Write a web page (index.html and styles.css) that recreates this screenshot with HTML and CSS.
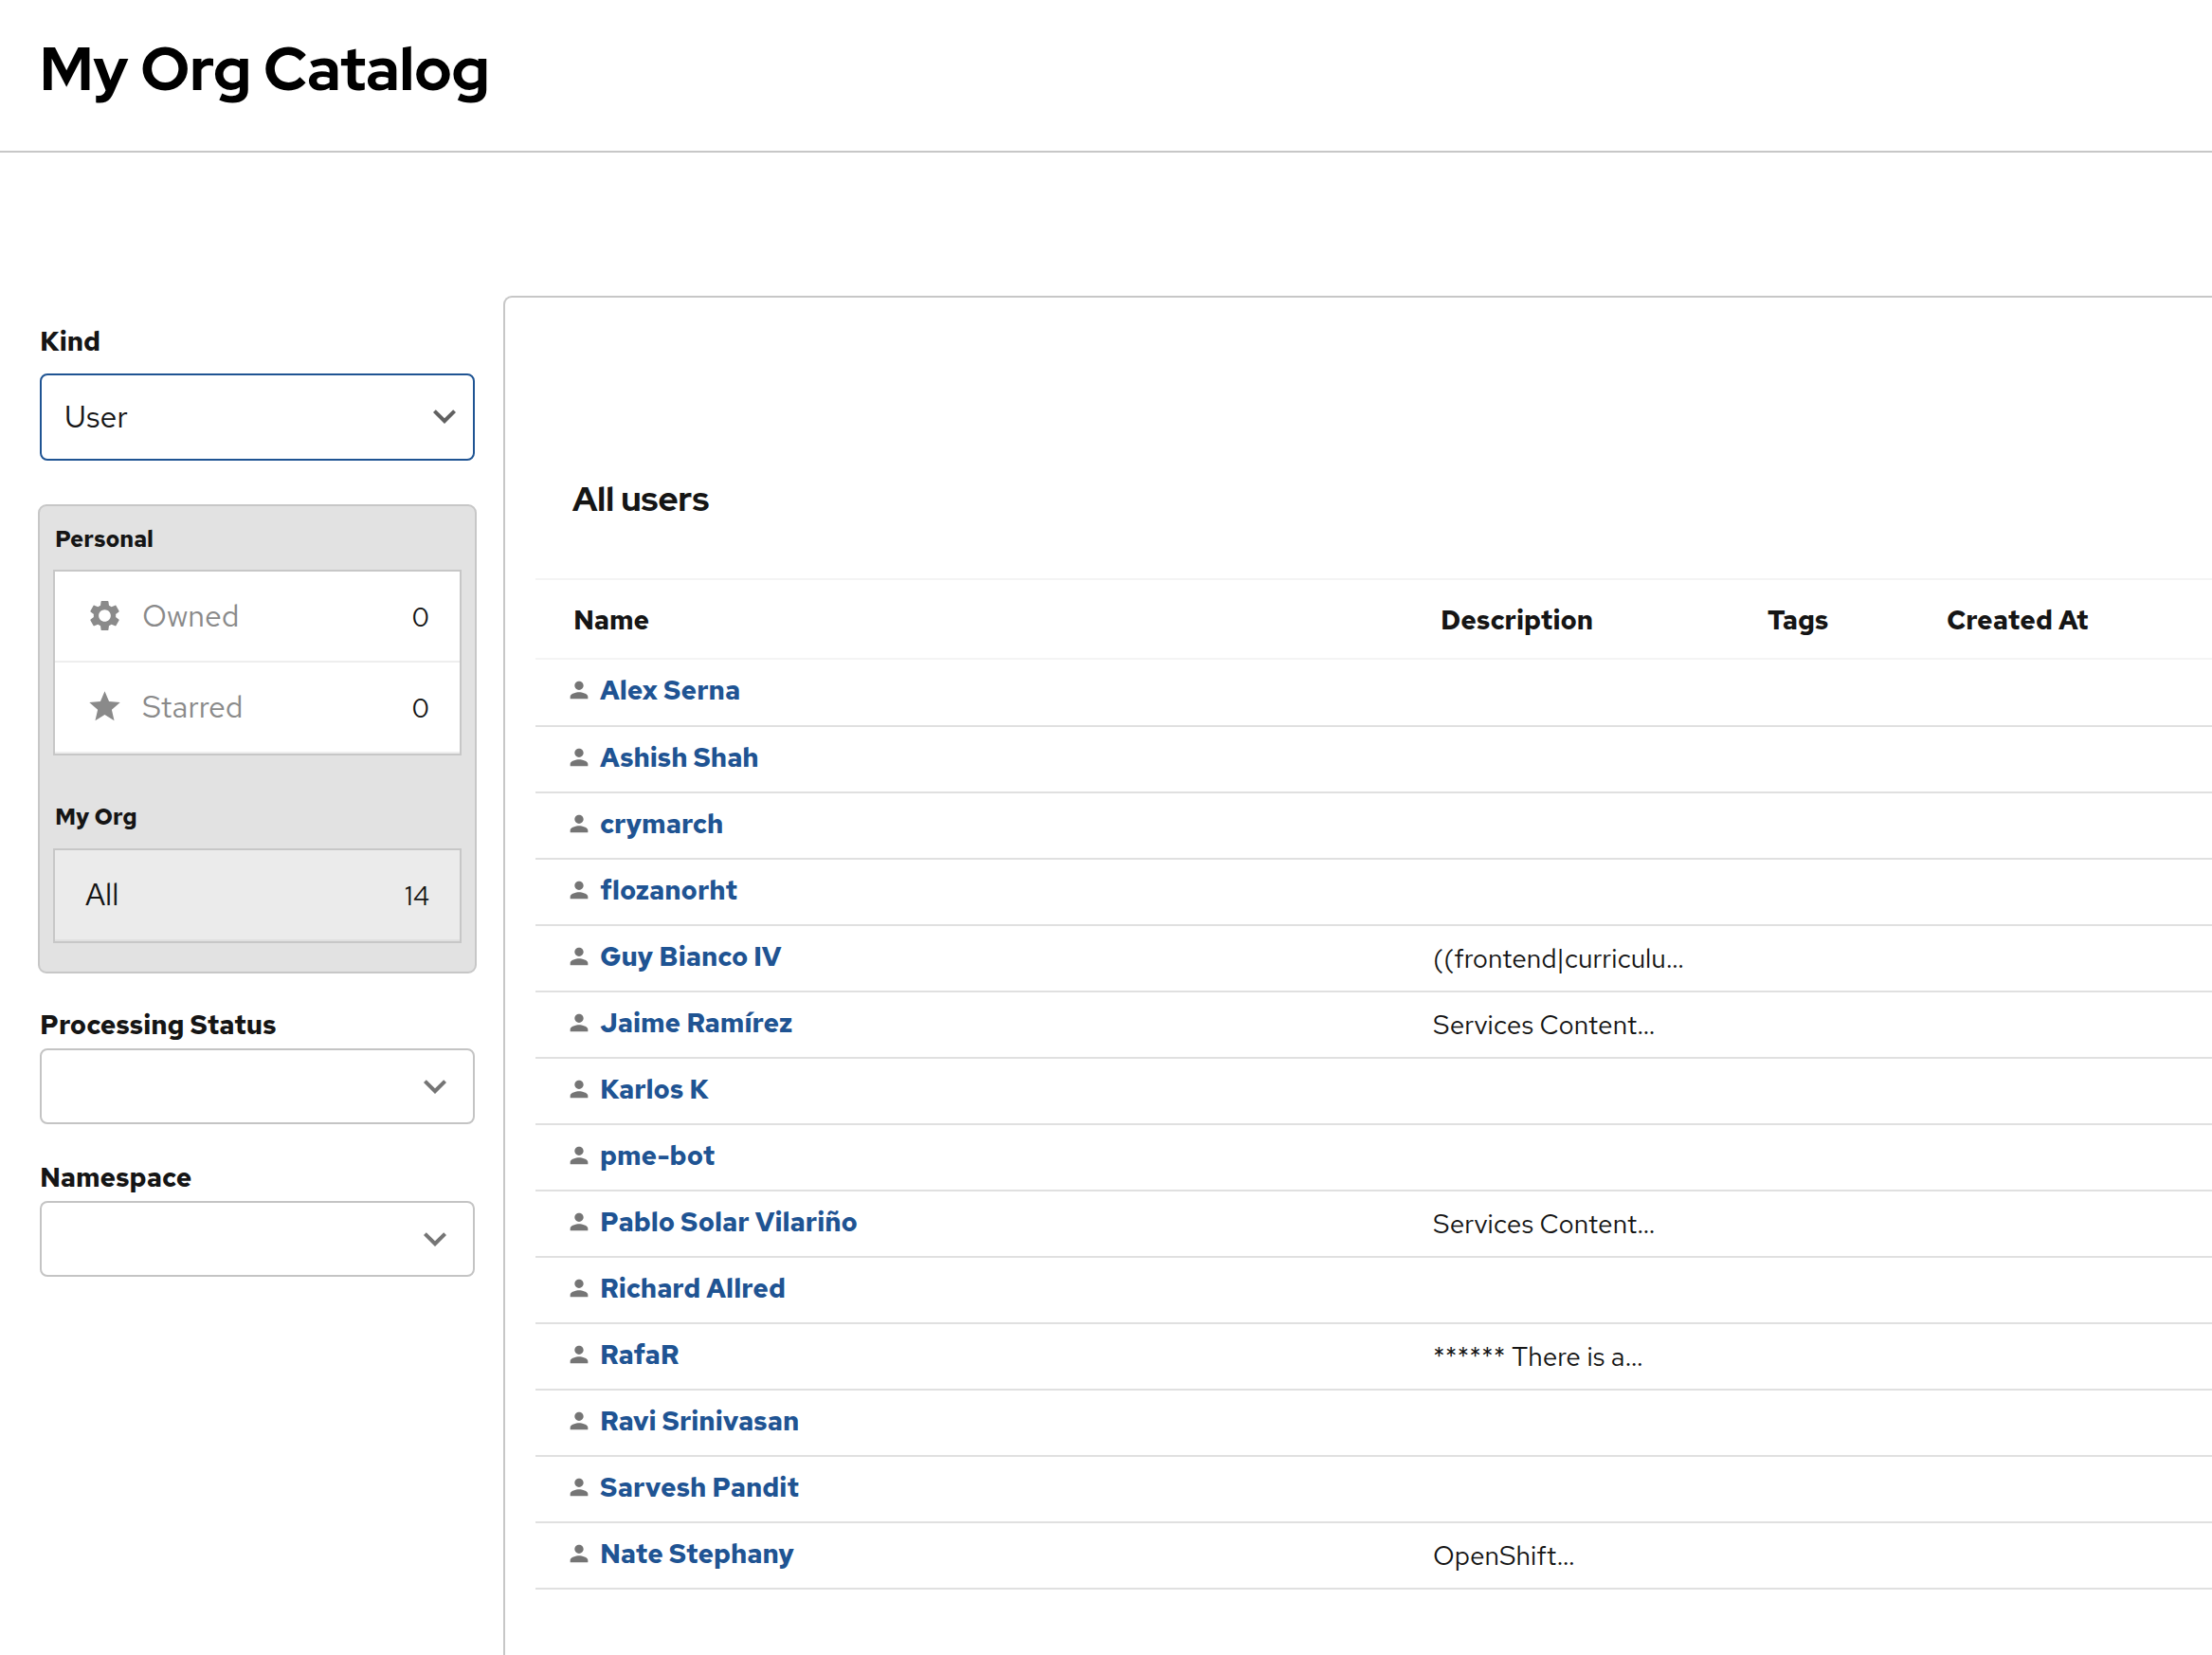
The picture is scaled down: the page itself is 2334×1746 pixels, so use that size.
FILE: index.html
```
<!DOCTYPE html>
<html lang="en">
<head>
<meta charset="utf-8">
<title>My Org Catalog</title>
<link rel="stylesheet" href="styles.css">
</head>
<body>
<svg class="sprite" aria-hidden="true">
  <symbol id="chevron" viewBox="0 0 24 24"><path d="M16.59 8.59 12 13.17 7.41 8.59 6 10l6 6 6-6z"/></symbol>
  <symbol id="gear" viewBox="0 0 24 24"><path d="M19.14 12.94c.04-.3.06-.61.06-.94 0-.32-.02-.64-.07-.94l2.03-1.58c.18-.14.23-.41.12-.61l-1.92-3.32c-.12-.22-.37-.29-.59-.22l-2.39.96c-.5-.38-1.03-.7-1.62-.94l-.36-2.54c-.04-.24-.24-.41-.48-.41h-3.84c-.24 0-.43.17-.47.41l-.36 2.54c-.59.24-1.13.57-1.62.94l-2.39-.96c-.22-.08-.47 0-.59.22L2.74 8.87c-.12.21-.08.47.12.61l2.03 1.58c-.05.3-.09.63-.09.94s.02.64.07.94l-2.03 1.58c-.18.14-.23.41-.12.61l1.92 3.32c.12.22.37.29.59.22l2.39-.96c.5.38 1.03.7 1.62.94l.36 2.54c.05.24.24.41.48.41h3.84c.24 0 .44-.17.47-.41l.36-2.54c.59-.24 1.13-.56 1.62-.94l2.39.96c.22.08.47 0 .59-.22l1.92-3.32c.12-.22.07-.47-.12-.61l-2.01-1.58zM12 15.9c-2.15 0-3.9-1.75-3.9-3.9s1.75-3.9 3.9-3.9 3.9 1.75 3.9 3.9-1.75 3.9-3.9 3.9z"/></symbol>
  <symbol id="star" viewBox="0 0 24 24"><path d="M12 17.27 18.18 21l-1.64-7.03L22 9.24l-7.19-.61L12 2 9.19 8.63 2 9.24l5.46 4.73L5.82 21z"/></symbol>
  <symbol id="person" viewBox="0 0 24 24"><path d="M12 12c2.21 0 4-1.79 4-4s-1.79-4-4-4-4 1.79-4 4 1.79 4 4 4zm0 2c-2.67 0-8 1.34-8 4v2h16v-2c0-2.66-5.33-4-8-4z"/></symbol>
</svg>
<header class="header"><h1>My Org Catalog</h1></header>
<div class="layout">
  <aside class="sidebar">
    <div class="label">Kind</div>
    <div class="select select-kind"><span class="value">User</span><svg class="chevron"><use href="#chevron"/></svg></div>
    <div class="group">
      <h2>Personal</h2>
      <ul>
        <li><svg class="item-icon"><use href="#gear"/></svg><span class="item-name muted">Owned</span><span class="count">0</span></li>
        <li><svg class="item-icon"><use href="#star"/></svg><span class="item-name muted">Starred</span><span class="count">0</span></li>
      </ul>
      <h2 class="org">My Org</h2>
      <ul>
        <li class="selected"><span class="item-name">All</span><span class="count">14</span></li>
      </ul>
    </div>
    <div class="label label-status">Processing Status</div>
    <div class="select select-empty"><svg class="chevron"><use href="#chevron"/></svg></div>
    <div class="label label-namespace">Namespace</div>
    <div class="select select-empty"><svg class="chevron"><use href="#chevron"/></svg></div>
  </aside>
  <main class="panel">
    <h2 class="panel-title">All users</h2>
    <div class="table">
      <div class="row head"><span>Name</span><span>Description</span><span>Tags</span><span>Created At</span></div>
      <div class="row first"><a><svg><use href="#person"/></svg>Alex Serna</a></div>
      <div class="row"><a><svg><use href="#person"/></svg>Ashish Shah</a></div>
      <div class="row"><a><svg><use href="#person"/></svg>crymarch</a></div>
      <div class="row"><a><svg><use href="#person"/></svg>flozanorht</a></div>
      <div class="row"><a><svg><use href="#person"/></svg>Guy Bianco IV</a><span class="desc">((frontend|curriculu…</span></div>
      <div class="row"><a><svg><use href="#person"/></svg>Jaime Ramírez</a><span class="desc">Services Content…</span></div>
      <div class="row"><a><svg><use href="#person"/></svg>Karlos K</a></div>
      <div class="row"><a><svg><use href="#person"/></svg>pme-bot</a></div>
      <div class="row"><a><svg><use href="#person"/></svg>Pablo Solar Vilariño</a><span class="desc">Services Content…</span></div>
      <div class="row"><a><svg><use href="#person"/></svg>Richard Allred</a></div>
      <div class="row"><a><svg><use href="#person"/></svg>RafaR</a><span class="desc">****** There is a…</span></div>
      <div class="row"><a><svg><use href="#person"/></svg>Ravi Srinivasan</a></div>
      <div class="row"><a><svg><use href="#person"/></svg>Sarvesh Pandit</a></div>
      <div class="row"><a><svg><use href="#person"/></svg>Nate Stephany</a><span class="desc">OpenShift…</span></div>
    </div>
  </main>
</div>
</body>
</html>
```
FILE: styles.css
```
* { box-sizing: border-box; }
body {
  margin: 0;
  height: 1746px;
  overflow: hidden;
  background: #fff;
  color: #151515;
  font-family: "Red Hat Text", Inter, sans-serif;
  font-weight: 400;
  display: flex;
  flex-direction: column;
}
h1, h2, ul { margin: 0; padding: 0; }
svg { fill: currentColor; flex: none; }
.sprite { display: none; }

.header { border-bottom: 2px solid #c7c7c7; padding-left: 42px; }
h1, .panel-title { font-family: "Red Hat Display", "Red Hat Text", Inter, sans-serif; font-weight: 800; }
h1 { font-size: 64px; line-height: 145px; height: 159px; color: #000; }

.layout { flex: 1; display: flex; }
.sidebar { width: 531px; padding: 179px 28px 0 40px; flex: none; }
.label { margin-left: 2px; font-size: 28px; font-weight: 700; line-height: 40px; }
.label-status { margin-top: 34px; }
.label-namespace { margin-top: 36px; }

.select {
  width: 459px;
  margin: 5px 0 0 2px;
  border: 2px solid #c4c4c4;
  border-radius: 8px;
  display: flex;
  align-items: center;
}
.select-kind { height: 92px; margin-top: 14px; padding: 0 6px 2px 24px; border-color: #1f5493; color: #616161; }
.select-empty { height: 80px; padding-right: 16px; color: #757575; }
.value { font-size: 32px; color: #151515; }
.chevron { width: 48px; height: 48px; margin-left: auto; }

.group { width: 463px; height: 495px; margin-top: 46px; padding: 2px 14px 0; background: #e2e2e2; border: 2px solid #c7c7c7; border-radius: 9px; }
.group h2 { padding-left: 2px; font-size: 24px; line-height: 65px; }
.group .org { height: 68px; margin-top: 30px; line-height: 70px; }
ul { list-style: none; border: 2px solid #c7c7c7; background: #fff; }
li { height: 96px; padding: 0 32px 2px; border-bottom: 2px solid #eee; display: flex; align-items: center; }
li.selected { background: #ebebeb; border-color: #e0e0e0; }
.item-icon { width: 39px; height: 39px; margin: 0 20px 0 1px; color: #8a8a8a; }
.item-name { font-size: 32px; }
.muted { color: #8a8a8a; }
.count { margin-left: auto; padding-top: 4px; font-size: 28px; }

.panel { flex: 1; border: 2px solid #c7c7c7; border-width: 2px 0 0 2px; border-top-left-radius: 9px; margin-top: 151px; padding-left: 32px; }
.panel-title { margin-left: 39px; padding-top: 181px; height: 296px; font-size: 36px; line-height: 62px; }
.row { height: 70px; padding-left: 32px; border-bottom: 2px solid #e0e0e0; display: grid; grid-template-columns: 915px 345px 189px 1fr; }
.head { height: 86px; padding-left: 40px; border-top: 2px solid #f4f4f4; border-color: #f4f4f4; font-size: 28px; font-weight: 700; line-height: 84px; }
.first { height: 71px; }
.row a { display: flex; color: #1f5493; font-size: 28px; font-weight: 700; line-height: 64px; }
.row svg { width: 28px; height: 28px; margin: 18px 8px 0 0; color: #757575; }
.desc { font-size: 28px; line-height: 68px; }
```
